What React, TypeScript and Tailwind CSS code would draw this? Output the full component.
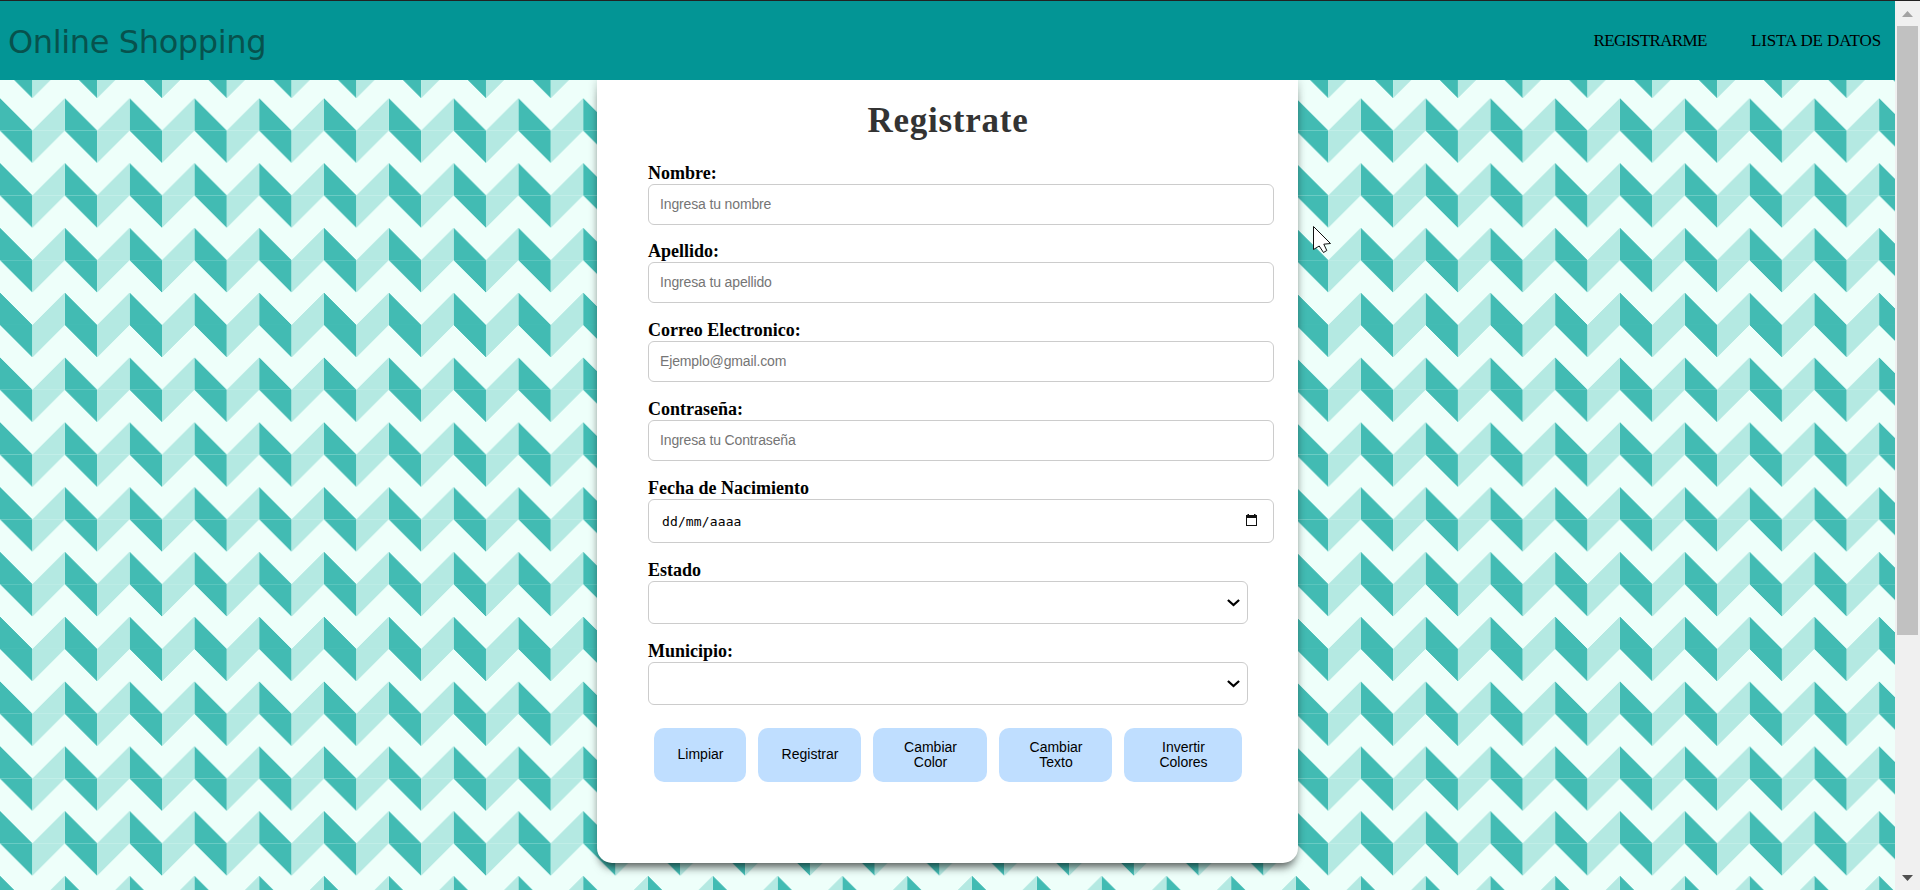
import type { ReactNode } from "react";

const BOX = "block rounded-[6px] border border-[#ccc] bg-white";

function Field({ label, gap = "mt-4", children }: { label: string; gap?: string; children: ReactNode }) {
  return (
    <div className={gap}>
      <label className="block h-[22px] font-['Liberation_Serif',serif] text-lg leading-[22px] font-bold text-black">
        {label}
      </label>
      {children}
    </div>
  );
}

function TextInput({ placeholder }: { placeholder: string }) {
  return (
    <input
      type="text"
      placeholder={placeholder}
      className={`${BOX} h-[41px] w-[626px] pr-3 pb-0.5 pl-[11px] text-sm tracking-[-0.14px] placeholder:text-[#757575]`}
    />
  );
}

function SelectBox() {
  return (
    <div className={`${BOX} flex h-[43px] w-[600px] items-center justify-end pr-[7px]`}>
      <svg width="13" height="8" viewBox="0 0 13 8" fill="none" stroke="#000" strokeWidth="2.3">
        <path d="M0.9 1L6.5 6L12.1 1" />
      </svg>
    </div>
  );
}

const BUTTONS: { text: string; width: string }[] = [
  { text: "Limpiar", width: "w-[92px]" },
  { text: "Registrar", width: "w-[103px]" },
  { text: "Cambiar Color", width: "w-[114px]" },
  { text: "Cambiar Texto", width: "w-[113px]" },
  { text: "Invertir Colores", width: "w-[118px]" },
];

export default function App() {
  return (
    <div className="relative flex h-[890px] w-[1920px] flex-col overflow-hidden font-['Liberation_Sans',Arial,sans-serif]">
      <div className="h-px shrink-0 bg-[#222]" />
      <div className="flex min-h-0 flex-1">
        <div className="flex w-[1895px] flex-col overflow-hidden [background:linear-gradient(135deg,#b4e9e2_25%,transparent_25%)_-32.4px_0/64.8px_64.8px,linear-gradient(225deg,#42bbb3_25%,transparent_25%)_-32.4px_0/64.8px_64.8px,linear-gradient(315deg,#b4e9e2_25%,transparent_25%)_0px_0/64.8px_64.8px,linear-gradient(45deg,#42bbb3_25%,#eefffa_25%)_0px_0/64.8px_64.8px]">
          <header className="z-10 flex h-[79px] shrink-0 items-center justify-between bg-[#039595] pr-[14px] pl-2">
            <div className="pt-0.5 font-['DejaVu_Sans',sans-serif] text-[32px] leading-[40px] tracking-[-0.37px] whitespace-nowrap text-[#07524d]">
              Online Shopping
            </div>
            <nav className="flex gap-[44px] font-['Liberation_Serif',serif] text-[17px] leading-5 whitespace-nowrap text-black">
              <a className="tracking-[-0.6px]">REGISTRARME</a>
              <a className="tracking-[-0.1px]">LISTA DE DATOS</a>
            </nav>
          </header>

          <main className="ml-[597px] h-[783px] w-[701px] rounded-b-[15px] bg-white pt-[21px] pl-[51px] shadow-[0_8px_10px_-4px_rgba(0,0,0,0.6),0_0_10px_rgba(0,0,0,0.2)]">
            <h1 className="w-[600px] text-center font-['Liberation_Serif',serif] text-[35px] leading-10 font-bold tracking-[0.75px] text-[#333]">
              Registrate
            </h1>
            <Field label="Nombre:" gap="mt-[21px]">
              <TextInput placeholder="Ingresa tu nombre" />
            </Field>
            <Field label="Apellido:" gap="mt-[15px]">
              <TextInput placeholder="Ingresa tu apellido" />
            </Field>
            <Field label="Correo Electronico:">
              <TextInput placeholder="Ejemplo@gmail.com" />
            </Field>
            <Field label="Contraseña:">
              <TextInput placeholder="Ingresa tu Contraseña" />
            </Field>
            <Field label="Fecha de Nacimiento">
              <div className={`${BOX} flex h-[44px] w-[626px] items-center justify-between pr-4 pl-[13px]`}>
                <span className="pt-0.5 font-['DejaVu_Sans_Mono',monospace] text-[13px] tracking-[0.13px] text-black">
                  dd/mm/aaaa
                </span>
                <svg width="11" height="12" viewBox="0 0 11 12" className="-mt-0.5">
                  <path d="M0 1H1.5V0H3V1H8V0H9.5V1H11V12H0ZM1 4V11H10V4Z" fill="#111" fillRule="evenodd" />
                </svg>
              </div>
            </Field>
            <Field label="Estado">
              <SelectBox />
            </Field>
            <Field label="Municipio:">
              <SelectBox />
            </Field>
            <div className="mt-[23px] ml-1.5 flex gap-3">
              {BUTTONS.map((b) => (
                <button
                  key={b.text}
                  className={`${b.width} h-[54px] rounded-[10px] bg-[#bfdeff] pr-[19px] pb-px pl-5 text-sm leading-[15px] text-black`}
                >
                  {b.text}
                </button>
              ))}
            </div>
          </main>
        </div>

        <div className="flex w-[25px] flex-col items-center bg-[#f0f0f0]">
          <svg width="11" height="6" viewBox="0 0 11 6" className="mt-[10px] shrink-0">
            <path d="M5.5 0L11 6H0Z" fill="#a3a3a3" />
          </svg>
          <div className="mt-[9px] h-[609px] w-[21px] bg-[#c1c1c1]" />
          <svg width="11" height="6" viewBox="0 0 11 6" className="mt-auto mb-[9px] shrink-0">
            <path d="M0 0H11L5.5 6Z" fill="#505050" />
          </svg>
        </div>
      </div>

      <svg width="19" height="28" viewBox="0 0 19 28" className="absolute top-[226px] left-[1313px] z-20">
        <path
          d="M0.5 0.5L17.5 17.5L10.8 18.2L13.8 24.5L10.5 26.5L6.2 20L0.5 23.5Z"
          fill="#fff"
          stroke="#111"
          strokeWidth="1"
        />
      </svg>
    </div>
  );
}
